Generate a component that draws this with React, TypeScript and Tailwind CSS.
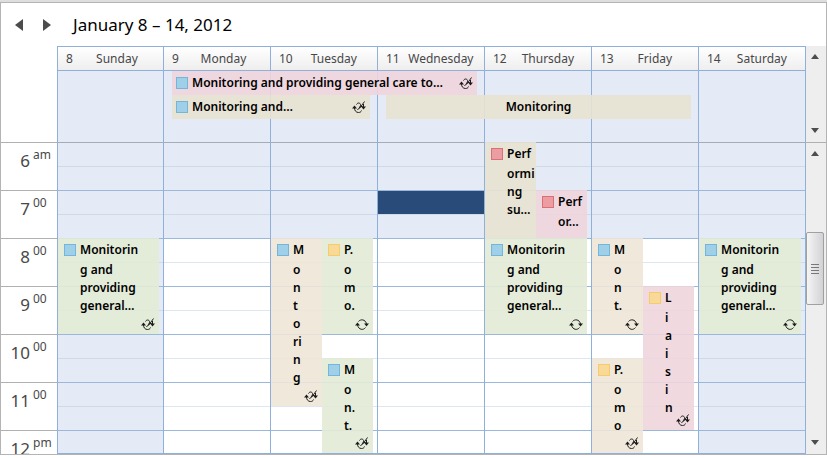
import type { ReactNode } from "react";

type Tone = "pink" | "sand" | "beige" | "green";
type Tag = "blue" | "yellow" | "red";
type Repeat = "series" | "exception";

interface CalendarEvent {
  place: string;
  tone: Tone;
  tag: Tag;
  lines: string[];
  repeat?: Repeat;
}

interface Day {
  date: number;
  name: string;
  weekend?: boolean;
  selected?: number;
  events: CalendarEvent[];
}

const tones: Record<Tone, string> = {
  pink: "bg-[#eed5dc]/90",
  sand: "bg-[#e8e3d2]/90",
  beige: "bg-[#ede6d7]/90",
  green: "bg-[#e2ebd6]/90",
};

const tags: Record<Tag, string> = {
  blue: "border-[#74b5dc] bg-[#9fd0e8]",
  yellow: "border-[#f6cb6c] bg-[#f9d998]",
  red: "border-[#d97078] bg-[#eb9da1]",
};

const general = ["Monitorin", "g and", "providing", "general…"];

const days: Day[] = [
  {
    date: 8,
    name: "Sunday",
    weekend: true,
    events: [{ place: "col-start-1 col-span-2 row-start-5 row-span-4", tone: "green", tag: "blue", lines: general, repeat: "exception" }],
  },
  { date: 9, name: "Monday", events: [] },
  {
    date: 10,
    name: "Tuesday",
    events: [
      { place: "col-start-1 row-start-5 row-span-7", tone: "beige", tag: "blue", lines: ["M", "o", "n", "t", "o", "ri", "n", "g"], repeat: "exception" },
      { place: "col-start-2 row-start-5 row-span-4", tone: "green", tag: "yellow", lines: ["P.", "o", "m", "o."], repeat: "series" },
      { place: "col-start-2 row-start-10 row-span-4", tone: "green", tag: "blue", lines: ["M", "o", "n.", "t."], repeat: "exception" },
    ],
  },
  { date: 11, name: "Wednesday", selected: 2, events: [] },
  {
    date: 12,
    name: "Thursday",
    events: [
      { place: "col-start-1 row-start-1 row-span-4", tone: "sand", tag: "red", lines: ["Perf", "ormi", "ng", "su…"] },
      { place: "col-start-2 row-start-3 row-span-2", tone: "pink", tag: "red", lines: ["Perf", "or…"] },
      { place: "col-start-1 col-span-2 row-start-5 row-span-4", tone: "green", tag: "blue", lines: general, repeat: "series" },
    ],
  },
  {
    date: 13,
    name: "Friday",
    events: [
      { place: "col-start-1 row-start-5 row-span-4", tone: "beige", tag: "blue", lines: ["M", "o", "n", "t."], repeat: "series" },
      { place: "col-start-2 row-start-7 row-span-6", tone: "pink", tag: "yellow", lines: ["L", "i", "a", "i", "s", "i", "n"], repeat: "exception" },
      { place: "col-start-1 row-start-10 row-span-4", tone: "beige", tag: "yellow", lines: ["P.", "o", "m", "o"], repeat: "exception" },
    ],
  },
  {
    date: 14,
    name: "Saturday",
    weekend: true,
    events: [{ place: "col-start-1 col-span-2 row-start-5 row-span-4", tone: "green", tag: "blue", lines: general, repeat: "series" }],
  },
];

const hours: [string, string][] = [
  ["6", "am"],
  ["7", "00"],
  ["8", "00"],
  ["9", "00"],
  ["10", "00"],
  ["11", "00"],
  ["12", "pm"],
];

const slots = Array.from({ length: 13 }, (_, i) => i);

const slotRows = [
  "row-start-1", "row-start-2", "row-start-3", "row-start-4", "row-start-5", "row-start-6", "row-start-7",
  "row-start-8", "row-start-9", "row-start-10", "row-start-11", "row-start-12", "row-start-13",
];

const dayColumns = ["col-start-1", "col-start-2", "col-start-3", "col-start-4", "col-start-5", "col-start-6", "col-start-7"];

function slotLine(slot: number, shaded: boolean) {
  if (slot === 0) return "border-[#a3acbb]";
  if (slot % 2 === 0) return "border-[#9ab7dc]";
  return shaded ? "border-[#d0d9e8]" : "border-[#dfe5f1]";
}

function slotFill(selected: boolean, shaded: boolean) {
  if (selected) return "bg-[#284b7a]";
  return shaded ? "bg-[#e5ebf6]" : "bg-white";
}

function RepeatIcon({ kind }: { kind: Repeat }) {
  return (
    <svg width="14" height="13" viewBox="0 0 14 13" fill="none" stroke="#1c1c1c" aria-hidden="true">
      {kind === "series" ? (
        <>
          <path d="M3.5 3.5C5.5 1 10.5 1 11.5 6" />
          <path d="M10.5 9.5C8.5 12.5 3.5 12 2.5 7" />
        </>
      ) : (
        <>
          <path d="M4.5 3.5C5.5 1.5 8 1.5 8.5 3.5C9 5 7 7 5.5 9" />
          <path d="M2.5 7C2.5 9.5 4 11.5 6.5 11.5C8 11.5 9 11 9.5 9.5" />
          <path d="M12.5 0.5L7.5 7.5M8 5L11 6M11.5 3V6" />
        </>
      )}
      <path d="M0 7.5L2.5 4.5L5 7.5Z" fill="#1c1c1c" stroke="none" />
      <path d="M9 5.5H14L11.5 8.5Z" fill="#1c1c1c" stroke="none" />
    </svg>
  );
}

function Swatch({ tag }: { tag: Tag }) {
  return <span className={`size-3 shrink-0 border ${tags[tag]}`} />;
}

function TimedEvent({ event }: { event: CalendarEvent }) {
  return (
    <article className={`relative flex gap-1 overflow-hidden pt-1.5 pl-1.5 ${event.place} ${tones[event.tone]}`}>
      <Swatch tag={event.tag} />
      <div className="-mt-[3px] text-[12px] leading-[18px] font-semibold text-black">
        {event.lines.map((line, i) => (
          <span key={i} className={i === 0 ? "block h-5 leading-[18px]" : "block"}>
            {line}
          </span>
        ))}
      </div>
      {event.repeat && (
        <span className="absolute right-1 bottom-[3px]">
          <RepeatIcon kind={event.repeat} />
        </span>
      )}
    </article>
  );
}

function BarEvent({ place, tone, title, repeat }: { place: string; tone: Tone; title: string; repeat: Repeat }) {
  return (
    <article className={`mx-2 flex min-w-0 items-center gap-1 px-1 text-[12px] font-semibold text-black ${place} ${tones[tone]}`}>
      <Swatch tag="blue" />
      <span className="flex-1 whitespace-nowrap">{title}</span>
      <RepeatIcon kind={repeat} />
    </article>
  );
}

function Arrow({ dir, label }: { dir: "up" | "down"; label: string }) {
  return (
    <button type="button" aria-label={label} className="flex h-5 w-full items-center justify-center">
      <svg width="8" height="5" viewBox="0 0 8 5" fill="#4d4d4d" aria-hidden="true">
        <path d={dir === "up" ? "M0 5L4 0L8 5Z" : "M0 0H8L4 5Z"} />
      </svg>
    </button>
  );
}

function Scrollbar({ name, children }: { name: string; children?: ReactNode }) {
  return (
    <div className="flex w-5 shrink-0 flex-col justify-between bg-[#eeeeef] pr-0.5 pb-0.5">
      <Arrow dir="up" label={`Scroll ${name} up`} />
      {children}
      <Arrow dir="down" label={`Scroll ${name} down`} />
    </div>
  );
}

export default function App() {
  return (
    <div className="border-t-2 border-[#dedede] font-['Noto_Sans',sans-serif] text-[#484848]">
      <main className="border border-[#b4b4b4] bg-white">
        <header className="flex h-[43px] items-center pl-3">
          <button type="button" aria-label="Previous week" className="flex size-3 items-center justify-center">
            <svg width="8" height="12" viewBox="0 0 8 12" fill="#4c4c4c" aria-hidden="true">
              <path d="M0 6L8 0V12Z" />
            </svg>
          </button>
          <button type="button" aria-label="Next week" className="ml-4 flex size-3 items-center justify-center">
            <svg width="8" height="12" viewBox="0 0 8 12" fill="#4c4c4c" aria-hidden="true">
              <path d="M8 6L0 0V12Z" />
            </svg>
          </button>
          <h1 className="ml-5 text-[17px] leading-6 text-black">January 8 – 14, 2012</h1>
        </header>

        <section aria-label="All-day events" className="flex h-24 pl-14">
          <div className="grid flex-1 grid-cols-[106fr_repeat(6,107fr)] grid-rows-[25px_24px_24px_23px] border-l border-[#8eb0db]">
            {days.map((day, i) => (
              <div key={day.date} className={`row-span-4 row-start-1 border-t border-r border-[#8eb0db] bg-[#e5ebf6] ${dayColumns[i]}`}>
                <h2 className="flex h-6 items-center border-b border-[#8eb0db] bg-linear-to-b from-white to-[#eeeeee] pr-0.5 pl-2 text-[12px] font-normal">
                  <span>{day.date}</span>
                  <span className="flex-1 text-center">{day.name}</span>
                </h2>
              </div>
            ))}
            <BarEvent place="col-start-2 col-span-3 row-start-2" tone="pink" title="Monitoring and providing general care to…" repeat="exception" />
            <BarEvent place="col-start-2 col-span-2 row-start-3" tone="sand" title="Monitoring and…" repeat="exception" />
            <article className={`col-span-3 col-start-4 row-start-3 mx-2 text-center text-[12px] leading-6 font-semibold text-black ${tones.sand}`}>Monitoring</article>
          </div>
          <Scrollbar name="all-day events" />
        </section>

        <section aria-label="Schedule" className="flex">
          <ol className="h-[312px] w-14 shrink-0 overflow-hidden">
            {hours.map(([hour, suffix]) => (
              <li key={hour} className="flex h-12 items-start justify-end border-t border-[#b0b0b0] pr-2">
                <span className="pt-1.5 text-[17px] leading-6">{hour}</span>
                <span className="ml-[3px] w-4 pt-1 text-[12px] leading-4">{suffix}</span>
              </li>
            ))}
          </ol>
          <div className="grid flex-1 grid-cols-[106fr_repeat(6,107fr)] border-b border-l border-[#8eb0db]">
            {days.map((day) => (
              <div key={day.date} className="grid grid-cols-[1fr_1fr_4px] grid-rows-[repeat(12,24px)_23px] border-r border-[#8eb0db]">
                {slots.map((slot) => {
                  const shaded = day.weekend || slot < 4;
                  return (
                    <div
                      key={slot}
                      className={`col-span-3 col-start-1 border-t ${slotRows[slot]} ${slotLine(slot, shaded)} ${slotFill(day.selected === slot, shaded)}`}
                    />
                  );
                })}
                {day.events.map((event) => (
                  <TimedEvent key={event.place} event={event} />
                ))}
              </div>
            ))}
          </div>
          <div className="flex border-t border-[#b0b0b0]">
            <Scrollbar name="schedule">
              <div className="mt-[69px] mb-auto flex h-[73px] items-center justify-center rounded-xs border border-[#a0a0a0] bg-linear-to-r from-[#f5f5f5] to-[#d2d2d5]">
                <svg width="8" height="11" viewBox="0 0 8 11" stroke="#777" aria-hidden="true">
                  <path d="M0 1.5H8M0 4.5H8M0 7.5H8M0 10.5H8" />
                </svg>
              </div>
            </Scrollbar>
          </div>
        </section>
      </main>
    </div>
  );
}
